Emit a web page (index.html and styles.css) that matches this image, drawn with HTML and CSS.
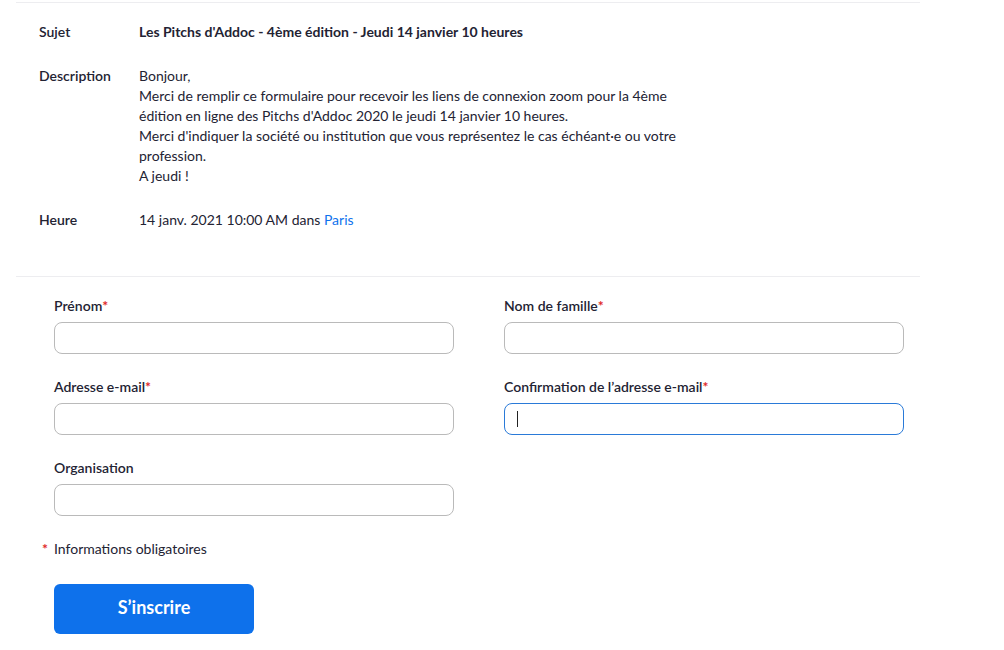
FILE: index.html
```html
<!DOCTYPE html>
<html lang="fr">
<head>
<meta charset="utf-8">
<link rel="stylesheet" href="styles.css">
</head>
<body>
<div class="page">
  <div class="info">
    <div class="row">
      <div class="label">Sujet</div>
      <div class="value bold">Les Pitchs d'Addoc - 4ème édition - Jeudi 14 janvier 10 heures</div>
    </div>
    <div class="row">
      <div class="label">Description</div>
      <div class="value desc">Bonjour,<br>Merci de remplir ce formulaire pour recevoir les liens de connexion zoom pour la 4ème édition en ligne des Pitchs d'Addoc 2020 le jeudi 14 janvier 10 heures.<br>Merci d'indiquer la société ou institution que vous représentez le cas échéant·e ou votre profession.<br>A jeudi !</div>
    </div>
    <div class="row">
      <div class="label">Heure</div>
      <div class="value">14 janv. 2021 10:00 AM dans <a class="link">Paris</a></div>
    </div>
  </div>
  <form class="form">
    <div class="grid">
      <div class="field">
        <label>Prénom<span class="req">*</span></label>
        <div class="input"></div>
      </div>
      <div class="field">
        <label>Nom de famille<span class="req">*</span></label>
        <div class="input"></div>
      </div>
      <div class="field">
        <label>Adresse e-mail<span class="req">*</span></label>
        <div class="input"></div>
      </div>
      <div class="field">
        <label>Confirmation de l’adresse e-mail<span class="req">*</span></label>
        <div class="input focus"><span class="caret"></span></div>
      </div>
      <div class="field">
        <label>Organisation</label>
        <div class="input"></div>
      </div>
    </div>
    <div class="note"><span class="req star">*</span>Informations obligatoires</div>
    <button type="button" class="btn">S’inscrire</button>
  </form>
</div>
</body>
</html>
```
FILE: styles.css
```css
* { box-sizing: border-box; }
html, body { margin: 0; padding: 0; background: #fff; }
body {
  font-family: Lato, "Open Sans", sans-serif;
  color: #232333;
  font-size: 14px;
}
.page {
  width: 904px;
  margin-left: 16px;
  border-top: 1px solid #ededf0;
  margin-top: 2px;
}
.info {
  padding: 19px 0 46px 23px;
  border-bottom: 1px solid #ededf0;
}
.row {
  display: flex;
  line-height: 20px;
  margin-bottom: 24px;
}
.row:last-child { margin-bottom: 0; }
.label {
  width: 100px;
  flex: none;
  font-weight: 600;
}
.value { width: 550px; }
.bold { font-weight: 700; }
.link { color: #0e72ed; text-decoration: none; }
.form {
  padding: 19px 0 0 38px;
}
.grid {
  display: grid;
  grid-template-columns: 400px 400px;
  column-gap: 50px;
  row-gap: 23px;
}
.field label {
  display: block;
  font-weight: 600;
  line-height: 20px;
  margin-bottom: 6px;
}
.req { color: #e02828; font-weight: 700; }
.input {
  height: 32px;
  border: 1px solid #bababa;
  border-radius: 8px;
  position: relative;
}
.input.focus { border-color: #2a7ad8; }
.caret {
  position: absolute;
  left: 12px;
  top: 7px;
  width: 1px;
  height: 16px;
  background: #222;
}
.note {
  margin: 23px 0 0 -14px;
  line-height: 20px;
}
.note .star { display: inline-block; width: 14px; padding-left: 2px; }
.btn {
  display: block;
  margin-top: 25px;
  width: 200px;
  height: 50px;
  padding: 0 0 4px;
  border: 0;
  border-radius: 6px;
  background: #0e71eb;
  color: #fff;
  font-family: Lato, sans-serif;
  font-weight: 700;
  font-size: 18px;
}
```
